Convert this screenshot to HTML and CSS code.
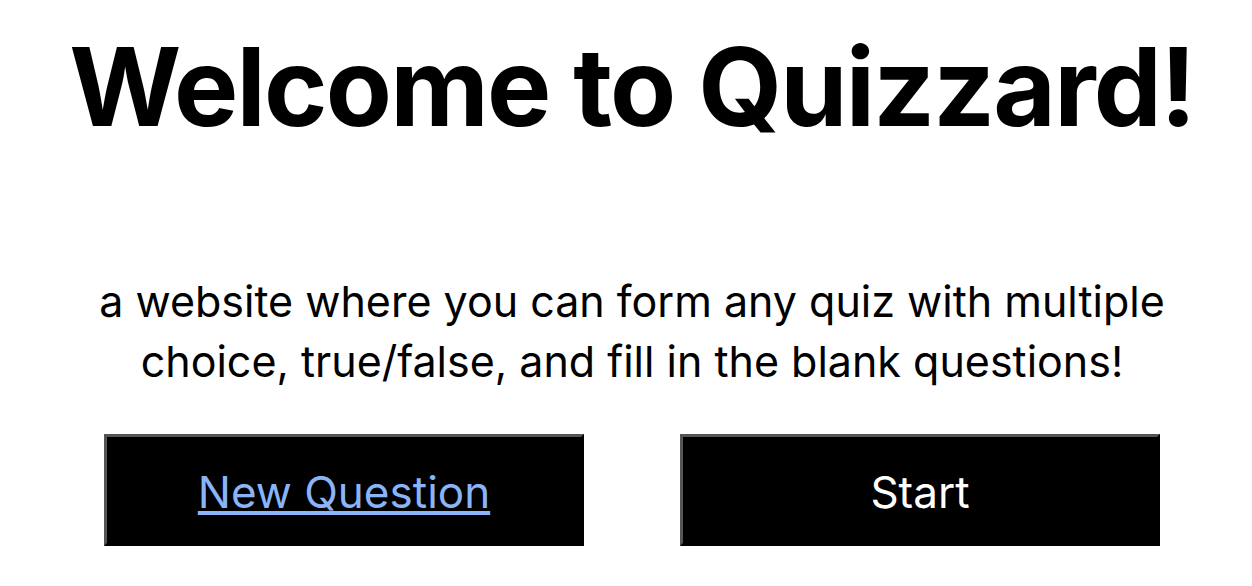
FILE: index.html
```html
<!DOCTYPE html>
<html lang="en">
<head>
<meta charset="utf-8">
<title>Quizzard</title>
<link rel="stylesheet" href="styles.css">
</head>
<body>
<main class="page">
  <h1 class="title">Welcome to Quizzard!</h1>
  <p class="intro">a website where you can form any quiz with multiple choice, true/false, and fill in the blank questions!</p>
  <div class="actions">
    <button class="btn" type="button"><a class="btn-link" href="#">New Question</a></button>
    <button class="btn" type="button"><span class="btn-text">Start</span></button>
  </div>
</main>
</body>
</html>
```
FILE: styles.css
```css
html, body {
  margin: 0;
  padding: 0;
  background: #fff;
}
body {
  font-family: Inter, "Liberation Sans", Arial, sans-serif;
  color: #000;
}
.page {
  display: flex;
  flex-direction: column;
  align-items: center;
  padding-left: 12px;
}
.title {
  margin: 22px 0 0;
  font-size: 108px;
  font-weight: 700;
  line-height: 130px;
  letter-spacing: -1.8px;
  white-space: nowrap;
}
.intro {
  margin: 119px 0 0;
  max-width: 1100px;
  font-size: 43px;
  line-height: 60px;
  text-align: center;
}
.actions {
  display: flex;
  gap: 96px;
  margin-top: 43px;
}
.btn {
  box-sizing: border-box;
  width: 480px;
  height: 112px;
  background: #000;
  border-style: solid;
  border-width: 3px;
  border-color: #555 #000 #000 #555;
  font-family: inherit;
  font-size: 44px;
  padding: 4px 0 0;
  display: flex;
  align-items: center;
  justify-content: center;
}
.btn-link {
  color: #8ab4f8;
  text-decoration: underline;
}
.btn-text {
  color: #fff;
}
```
